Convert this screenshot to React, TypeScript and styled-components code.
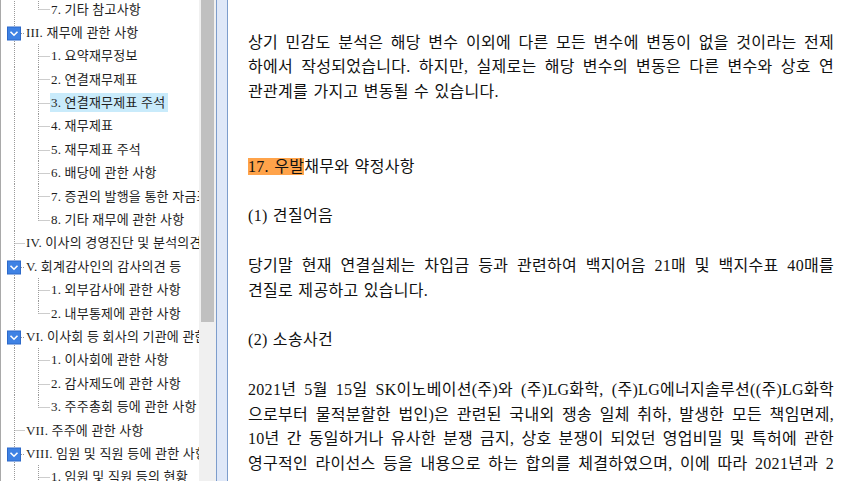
import React from "react";
import styled, { createGlobalStyle } from "styled-components";

const Global = createGlobalStyle`
  html, body { margin: 0; padding: 0; background: #fff; overflow: hidden; }
  #root { width: 850px; height: 481px; }
`;

const ROW_H = 23.4;
const MID = ROW_H / 2;

const Frame = styled.div`
  display: grid;
  grid-template-columns: 199px 17px 12px 1fr;
  width: 850px;
  height: 481px;
  overflow: hidden;
  background: #fff;
`;

const TreePanel = styled.div`
  border-left: 1px solid #a9a9a9;
  overflow: hidden;
  background: #fff;
`;

const TreeList = styled.ul`
  list-style: none;
  margin: -2.7px 0 0 0;
  padding: 0;
`;

const Row = styled.li`
  display: flex;
  align-items: center;
  height: ${ROW_H}px;
  white-space: nowrap;
`;

const Gutter = styled.svg`
  flex-shrink: 0;
  display: block;
`;

const Label = styled.span<{ $selected?: boolean }>`
  display: inline-block;
  height: 19px;
  line-height: 19px;
  padding: 0 3px 0 1px;
  font-family: "Liberation Serif", "Noto Sans CJK KR", serif;
  font-size: 13px;
  letter-spacing: 0.2px;
  color: #1e1e1e;
  background: ${(p) => (p.$selected ? "#c9ebfb" : "transparent")};
`;

const ScrollTrack = styled.div`
  background: #f0f0f0;
  padding: 0 2px;
`;

const ScrollThumb = styled.div`
  height: 322px;
  background: #c0c0c0;
`;

const Splitter = styled.div`
  background: #dfe8f8;
  border-left: 1px solid #7d9dcc;
  border-right: 1px solid #7d9dcc;
`;

const Doc = styled.div`
  padding: 30.6px 16px 0 20px;
  font-family: "Liberation Serif", "Noto Sans CJK KR", serif;
  font-size: 16px;
  letter-spacing: 0.3px;
  word-spacing: 1px;
  color: #111;
  line-height: 24.8px;
  overflow: hidden;
`;

const Para = styled.div<{ $after: number }>`
  margin-bottom: ${(p) => p.$after * 24.8}px;
`;

const Line = styled.div<{ $fill?: boolean }>`
  height: 24.8px;
  text-align: justify;
  text-align-last: ${(p) => (p.$fill ? "justify" : "left")};
`;

const Mark = styled.span`
  background: #ffa34a;
`;

type Node = {
  level: 1 | 2;
  label: string;
  expanded?: boolean;
  last?: boolean;
  selected?: boolean;
};

const nodes: Node[] = [
  { level: 2, label: "7. 기타 참고사항", last: true },
  { level: 1, label: "III. 재무에 관한 사항", expanded: true },
  { level: 2, label: "1. 요약재무정보" },
  { level: 2, label: "2. 연결재무제표" },
  { level: 2, label: "3. 연결재무제표 주석", selected: true },
  { level: 2, label: "4. 재무제표" },
  { level: 2, label: "5. 재무제표 주석" },
  { level: 2, label: "6. 배당에 관한 사항" },
  { level: 2, label: "7. 증권의 발행을 통한 자금조달에 관한 사항" },
  { level: 2, label: "8. 기타 재무에 관한 사항", last: true },
  { level: 1, label: "IV. 이사의 경영진단 및 분석의견" },
  { level: 1, label: "V. 회계감사인의 감사의견 등", expanded: true },
  { level: 2, label: "1. 외부감사에 관한 사항" },
  { level: 2, label: "2. 내부통제에 관한 사항", last: true },
  { level: 1, label: "VI. 이사회 등 회사의 기관에 관한 사항", expanded: true },
  { level: 2, label: "1. 이사회에 관한 사항" },
  { level: 2, label: "2. 감사제도에 관한 사항" },
  { level: 2, label: "3. 주주총회 등에 관한 사항", last: true },
  { level: 1, label: "VII. 주주에 관한 사항" },
  { level: 1, label: "VIII. 임원 및 직원 등에 관한 사항", expanded: true },
  { level: 2, label: "1. 임원 및 직원 등의 현황" },
];

const DOT = { stroke: "#9a9a9a", strokeWidth: 1, strokeDasharray: "1 1" };

function Connector({ node }: { node: Node }) {
  const w = node.level === 1 ? 24 : 49;
  const rootX = 13.5;
  const childX = 37.5;
  const y = Math.round(MID) + 0.5;
  return (
    <Gutter width={w} height={ROW_H}>
      <line x1={rootX} y1={0} x2={rootX} y2={ROW_H} {...DOT} />
      {node.level === 1 && !node.expanded && (
        <line x1={rootX} y1={y} x2={w} y2={y} {...DOT} />
      )}
      {node.level === 1 && node.expanded && (
        <g>
          <line x1={20} y1={y} x2={w} y2={y} {...DOT} />
          <rect x={6.5} y={y - 6.5} width={13} height={13} fill="#3e82e4" stroke="#2d69c9" />
          <polyline
            points={`${9.5},${y - 1.8} ${13},${y + 1.7} ${16.5},${y - 1.8}`}
            fill="none"
            stroke="#fff"
            strokeWidth={1.6}
          />
        </g>
      )}
      {node.level === 2 && (
        <g>
          <line x1={childX} y1={0} x2={childX} y2={node.last ? y : ROW_H} {...DOT} />
          <line x1={childX} y1={y} x2={w} y2={y} {...DOT} />
        </g>
      )}
    </Gutter>
  );
}

const p1 = [
  "상기 민감도 분석은 해당 변수 이외에 다른 모든 변수에 변동이 없을 것이라는 전제",
  "하에서 작성되었습니다. 하지만, 실제로는 해당 변수의 변동은 다른 변수와 상호 연",
  "관관계를 가지고 변동될 수 있습니다.",
];
const p2 = [
  "당기말 현재 연결실체는 차입금 등과 관련하여 백지어음 21매 및 백지수표 40매를",
  "견질로 제공하고 있습니다.",
];
const p3 = [
  "2021년 5월 15일 SK이노베이션(주)와 (주)LG화학, (주)LG에너지솔루션((주)LG화학",
  "으로부터 물적분할한 법인)은 관련된 국내외 쟁송 일체 취하, 발생한 모든 책임면제,",
  "10년 간 동일하거나 유사한 분쟁 금지, 상호 분쟁이 되었던 영업비밀 및 특허에 관한",
  "영구적인 라이선스 등을 내용으로 하는 합의를 체결하였으며, 이에 따라 2021년과 2",
];

function Lines({ lines, open }: { lines: string[]; open?: boolean }) {
  return (
    <>
      {lines.map((t, i) => (
        <Line key={i} $fill={open || i < lines.length - 1}>
          {t}
        </Line>
      ))}
    </>
  );
}

export default function App() {
  return (
    <>
      <Global />
      <Frame>
        <TreePanel>
          <TreeList>
            {nodes.map((n, i) => (
              <Row key={i}>
                <Connector node={n} />
                <Label $selected={n.selected}>{n.label}</Label>
              </Row>
            ))}
          </TreeList>
        </TreePanel>
        <ScrollTrack>
          <ScrollThumb />
        </ScrollTrack>
        <Splitter />
        <Doc>
          <Para $after={2}>
            <Lines lines={p1} />
          </Para>
          <Para $after={1}>
            <Line>
              <Mark>17. 우발</Mark>채무와 약정사항
            </Line>
          </Para>
          <Para $after={1}>
            <Line>(1) 견질어음</Line>
          </Para>
          <Para $after={1}>
            <Lines lines={p2} />
          </Para>
          <Para $after={1}>
            <Line>(2) 소송사건</Line>
          </Para>
          <Para $after={0}>
            <Lines lines={p3} open />
          </Para>
        </Doc>
      </Frame>
    </>
  );
}
